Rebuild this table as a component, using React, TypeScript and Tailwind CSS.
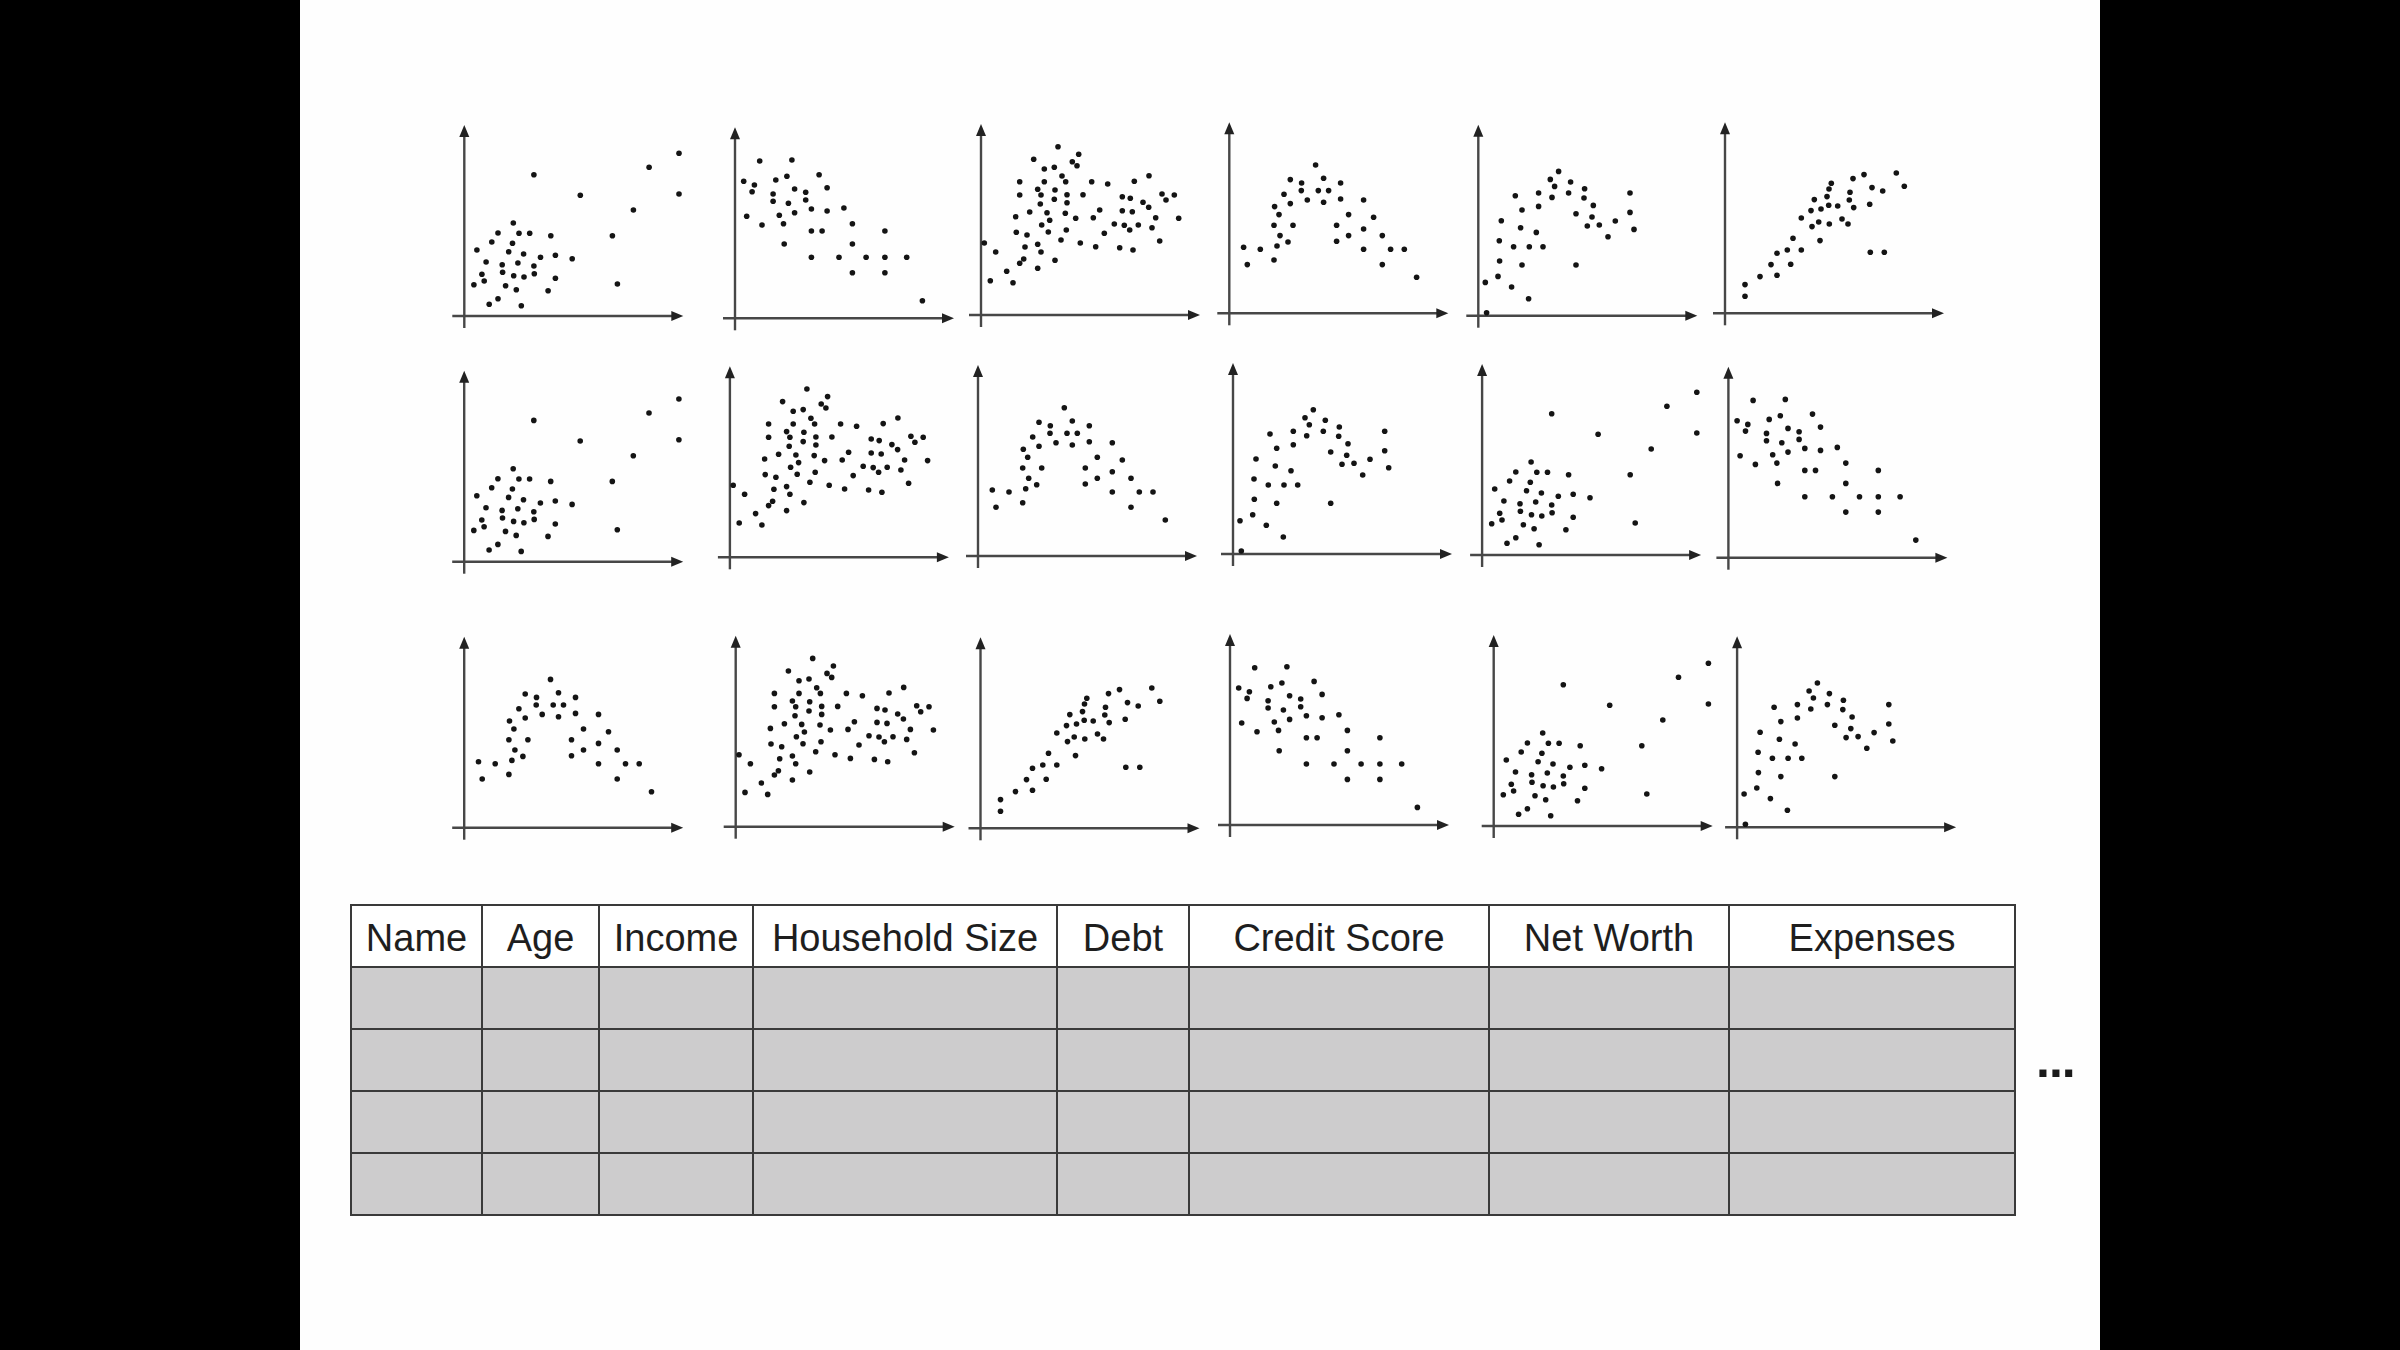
type Pt = [number, number];

// dot positions measured from the axis origin, y pointing up
const clusterOutliers: Pt[] = [
  [69.6, 141.3], [116, 120.7], [184.8, 148.7], [214.7, 162.7], [214.7, 122], [169.1, 106], [148.1, 80.3],
  [153.1, 32], [49, 93], [33.7, 83], [27.5, 74], [12.6, 66], [54.7, 82.7], [65.4, 82.7], [86.5, 80.3],
  [48.2, 72.7], [44.4, 64.3], [59.3, 62], [76.2, 58.7], [91.1, 60.7], [107.9, 57.3], [21.8, 54], [37.9, 51.3],
  [53.6, 53], [69.6, 50], [17.6, 41.7], [19.9, 35], [9.6, 31.3], [38.3, 43.7], [49.4, 40.3], [59.7, 39],
  [70, 42.3], [91.1, 37.7], [41.3, 30.3], [52, 26.3], [83.8, 25.3], [33.7, 17.3], [24.9, 11.7], [57, 10.3],
];

const negative: Pt[] = [
  [24.7, 157.3], [56.9, 158.3], [8.7, 137], [19.4, 133.3], [17.1, 126.6], [40.8, 138.3], [51.9, 142],
  [84.1, 143.6], [59.6, 129.3], [70.7, 126], [92.1, 130.6], [38.1, 124.3], [38.1, 117], [53.4, 115],
  [70.7, 118.3], [76.4, 109.3], [59.6, 105.6], [92.1, 107.3], [108.9, 110.3], [11.7, 102], [27, 93.3],
  [44.3, 103], [48.5, 94.6], [117.4, 94.6], [76.4, 87.3], [87.1, 87.3], [149.9, 87.3], [49.2, 74.3],
  [117.4, 74.3], [76.4, 61], [104, 61], [131.1, 61], [149.9, 61], [171.7, 61], [117.4, 45.6], [149.9, 45.6],
  [187.4, 17.6],
];

const cloud: Pt[] = [
  [77, 168.3], [97.7, 160.7], [52.7, 155.7], [91.3, 153.3], [96, 149.3], [63.3, 146], [73.3, 147.7], [81, 139],
  [38.7, 133.3], [63.3, 133.3], [84.7, 133.3], [110.7, 133.3], [126.7, 131], [153.3, 133.7], [168, 139.3],
  [56.7, 125.7], [74, 125], [38.7, 120], [60, 120], [86, 120.3], [102, 120.3], [73.3, 115.7], [86, 112.3],
  [59.3, 111], [141.3, 118.3], [149.3, 116.7], [162, 112.7], [181, 121], [193.3, 120], [185, 115],
  [167.7, 107.7], [118.7, 105], [141.3, 104.3], [151.3, 103.3], [48.7, 103], [66, 102.3], [84.3, 101.7],
  [34.7, 98.3], [68.7, 94.7], [94.7, 96.7], [112.3, 97.3], [174.7, 97.3], [197.7, 96.7], [133.3, 91],
  [143.3, 89.7], [157.3, 90], [148.7, 85], [171, 87.3], [60.7, 90], [35.3, 82.7], [67.3, 83], [85.3, 85],
  [46, 80], [123.3, 81.7], [3.3, 72], [80, 75], [99.3, 72], [178.7, 74], [56.7, 70.7], [44, 68], [114.7, 68.3],
  [138.7, 67.3], [152, 65], [14.7, 63], [60, 63], [42.7, 56], [38.7, 51.7], [74, 54.7], [56.7, 46.7],
  [25.7, 43.7], [9.3, 34.3], [32, 32.3],
];

const hump: Pt[] = [
  [86.3, 148.3], [61, 133.7], [72.3, 130.3], [94.3, 135], [111.3, 130.3], [54.7, 119], [72, 122.7], [89, 122.7],
  [99.3, 122.7], [61, 109.7], [78, 113.3], [94.3, 111], [111.3, 114.3], [134.3, 113.3], [45.3, 106.7],
  [49.7, 98.7], [119.3, 98.7], [144.3, 96], [44.7, 88], [63.7, 88], [107.3, 88], [134.3, 84.3], [50.7, 77.7],
  [119.3, 77.7], [153, 77.7], [14.3, 66], [31, 64], [47.7, 67.3], [58.7, 71.3], [107.3, 72], [134.3, 64],
  [161.3, 64], [175, 64], [18, 48.7], [44.7, 53.3], [153, 48.7], [187.3, 36],
];

const rising: Pt[] = [
  [80.3, 144.3], [72, 136.3], [76.3, 129.3], [92.3, 133.7], [106.3, 127], [90.3, 122.7], [60.3, 122.7],
  [37, 120], [73.7, 118.3], [105.7, 117.7], [151.7, 122.7], [115, 110.3], [60.3, 109.3], [43.7, 105.7],
  [97.7, 102], [113.7, 98.7], [151.7, 103.3], [23, 95], [137, 94.7], [109, 89.7], [121, 90.7], [42.3, 88],
  [155.7, 86.3], [58, 83.3], [129.7, 79], [21, 75], [35.3, 69], [51, 69], [64.7, 69], [21.3, 54.7],
  [43.7, 50.7], [97.7, 50.7], [7, 33.3], [19.7, 39.3], [33.3, 28.7], [50.3, 17], [8.3, 3],
];

const positive: Pt[] = [
  [171.3, 140.3], [179.3, 127], [139, 138.7], [128, 134.7], [106.3, 130], [104, 124.3], [102, 116.7],
  [89.3, 113.7], [125, 121], [124.3, 113.3], [147, 125.7], [157.7, 122.3], [144.7, 109], [128.7, 105.7],
  [103.7, 108], [112.7, 107.3], [96, 104.3], [86, 102.7], [76.3, 95.3], [93.7, 91.3], [87, 86.7],
  [104.3, 89.3], [117, 94.3], [123, 89.3], [68, 75], [95, 72.7], [62.3, 63.3], [76.3, 63.3], [52, 60],
  [145.3, 61], [159.3, 61], [46, 48.7], [65.7, 49], [35, 36.7], [52, 38], [20, 28.7], [20, 17],
];

type Plot = { pts: Pt[]; ox: number; oy: number };

const rows: { height: string; plots: Plot[] }[] = [
  {
    height: "h-[240px]",
    plots: [
      { pts: clusterOutliers, ox: 29.3, oy: 206 },
      { pts: negative, ox: 45, oy: 208.3 },
      { pts: cloud, ox: 36, oy: 205 },
      { pts: hump, ox: 29.3, oy: 203.3 },
      { pts: rising, ox: 23.3, oy: 205.7 },
      { pts: positive, ox: 15, oy: 203.3 },
    ],
  },
  {
    height: "h-[265px]",
    plots: [
      { pts: clusterOutliers, ox: 29.2, oy: 211.7 },
      { pts: cloud, ox: 39.9, oy: 207.3 },
      { pts: hump, ox: 33, oy: 206 },
      { pts: rising, ox: 33, oy: 204 },
      { pts: clusterOutliers, ox: 27.1, oy: 205 },
      { pts: negative, ox: 18.4, oy: 207.7 },
    ],
  },
  {
    height: "h-[230px]",
    plots: [
      { pts: hump, ox: 29.2, oy: 212.7 },
      { pts: cloud, ox: 45.7, oy: 211.7 },
      { pts: positive, ox: 35.5, oy: 213.3 },
      { pts: negative, ox: 30, oy: 210 },
      { pts: clusterOutliers, ox: 38.7, oy: 211 },
      { pts: rising, ox: 27.1, oy: 212.3 },
    ],
  },
];

const columns = [
  { label: "Name", w: "w-[131px]" },
  { label: "Age", w: "w-[117px]" },
  { label: "Income", w: "w-[154px]" },
  { label: "Household Size", w: "w-[304px]" },
  { label: "Debt", w: "w-[132px]" },
  { label: "Credit Score", w: "w-[300px]" },
  { label: "Net Worth", w: "w-[240px]" },
  { label: "Expenses", w: "w-[286px]" },
];

function Scatter({ pts, ox, oy }: Plot) {
  return (
    <svg width={255} height="100%" className="overflow-visible">
      <g stroke="#474747" strokeWidth={2.4}>
        <line x1={ox - 12} y1={oy} x2={ox + 209} y2={oy} />
        <line x1={ox} y1={oy + 12} x2={ox} y2={oy - 181} />
      </g>
      <g fill="#222">
        <polygon points={`${ox + 219},${oy} ${ox + 207},${oy - 5} ${ox + 207},${oy + 5}`} />
        <polygon points={`${ox},${oy - 191} ${ox - 5},${oy - 179} ${ox + 5},${oy - 179}`} />
      </g>
      <g fill="#141414">
        {pts.map(([x, y], i) => (
          <circle key={i} cx={ox + x} cy={oy - y} r={2.8} />
        ))}
      </g>
    </svg>
  );
}

export default function App() {
  return (
    <div className="w-[2400px] h-[1350px] bg-black flex justify-center overflow-hidden">
      <div className="w-[1800px] h-full bg-[#fefefe] flex flex-col pt-[110px] font-['Liberation_Sans',Arial,sans-serif] text-[#1e1e1e]">
        {/* scatter plot grid */}
        <div className="flex flex-col pl-[135px]">
          {rows.map((row, r) => (
            <div key={r} className={`flex ${row.height}`}>
              {row.plots.map((p, i) => (
                <div key={i} className="w-[255px] h-full">
                  <Scatter {...p} />
                </div>
              ))}
            </div>
          ))}
        </div>

        {/* data table */}
        <div className="flex items-center gap-[20px] pl-[50px] mt-[59px]">
          <table className="table-fixed border-collapse border-2 border-[#3a3a3a]">
            <thead>
              <tr className="h-[62px] bg-white">
                {columns.map((c) => (
                  <th
                    key={c.label}
                    className={`${c.w} border-2 border-[#3a3a3a] p-0 pt-[3px] text-center text-[38px] font-normal leading-none`}
                  >
                    {c.label}
                  </th>
                ))}
              </tr>
            </thead>
            <tbody>
              {[0, 1, 2, 3].map((r) => (
                <tr key={r} className="h-[62px] bg-[#cdcccd]">
                  {columns.map((c) => (
                    <td key={c.label} className="border-2 border-[#3a3a3a] p-0" />
                  ))}
                </tr>
              ))}
            </tbody>
          </table>
          <span className="text-[50px] font-bold leading-none tracking-[-1px] text-[#1a1a1a]">...</span>
        </div>
      </div>
    </div>
  );
}
